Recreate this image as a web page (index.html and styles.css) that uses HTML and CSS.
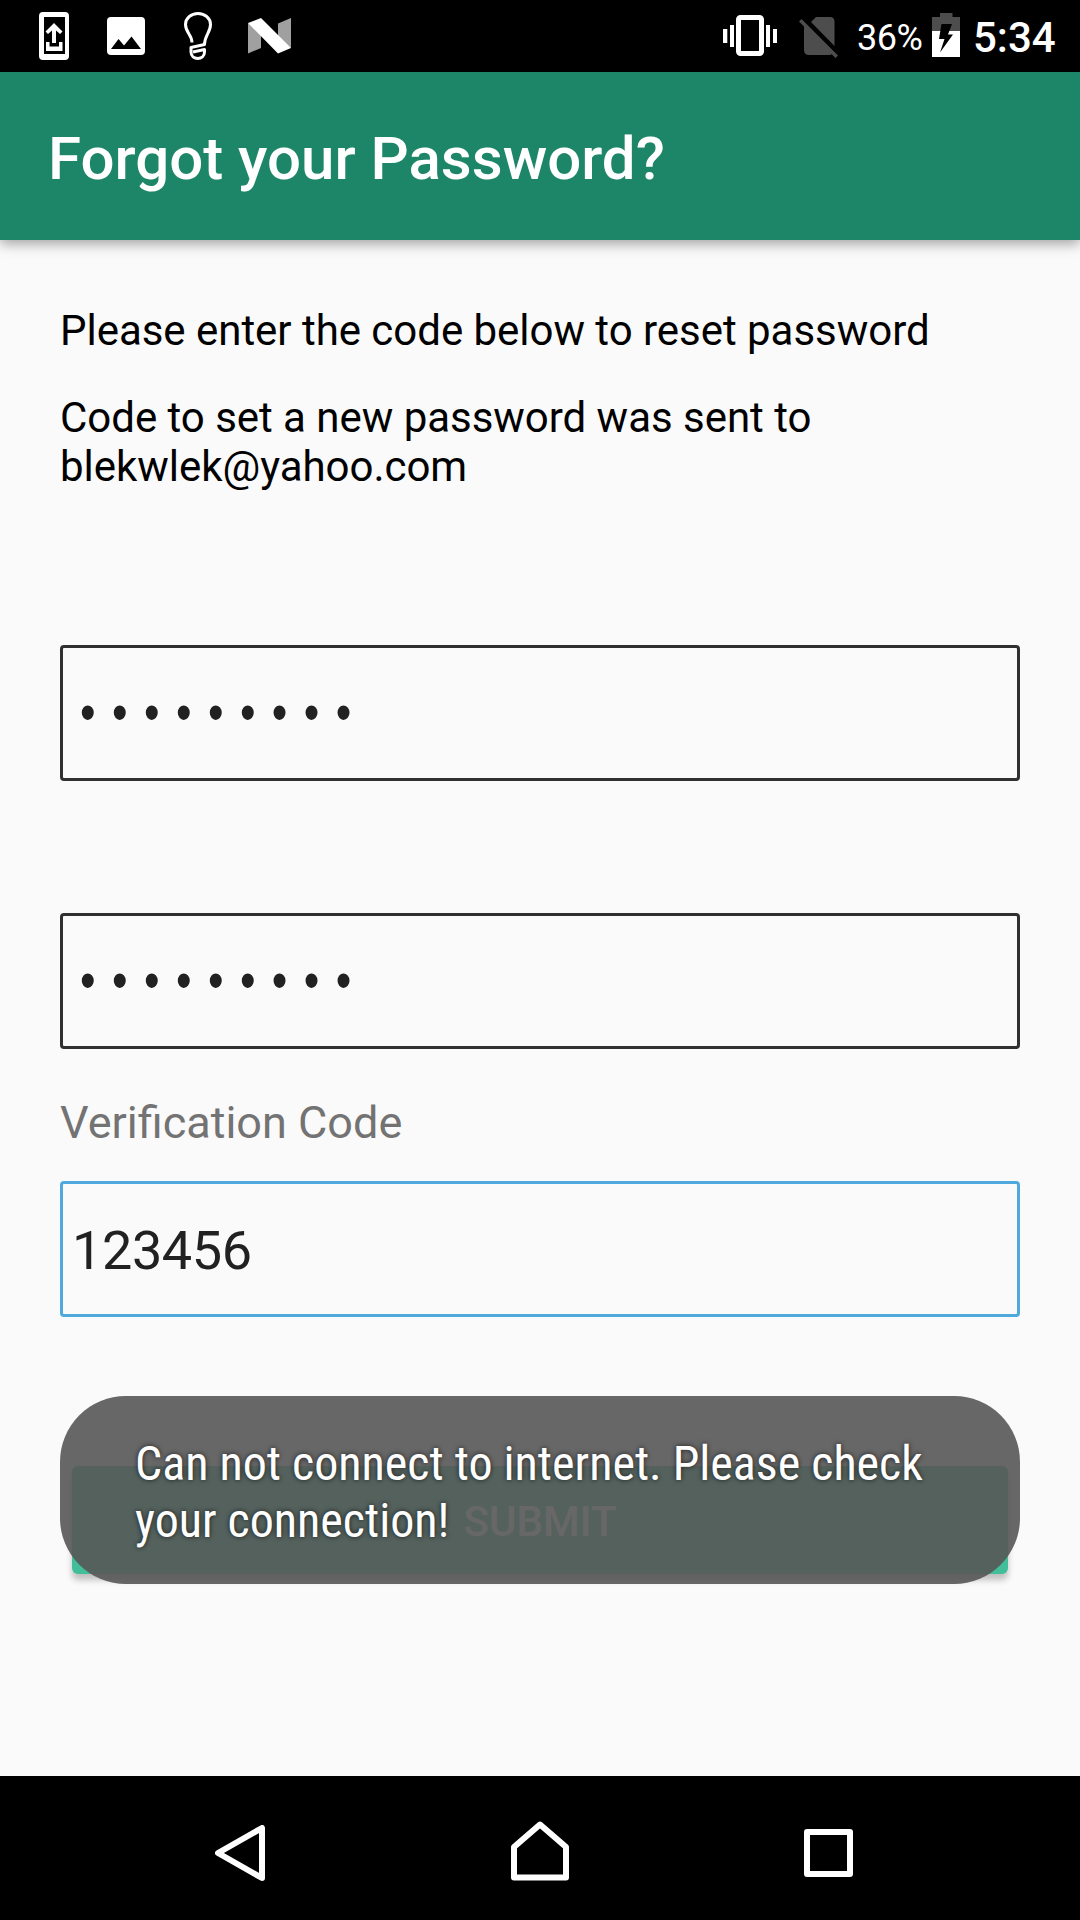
FILE: index.html
```html
<!DOCTYPE html>
<html lang="en">
<head>
<meta charset="utf-8">
<title>Forgot your Password?</title>
<link rel="stylesheet" href="styles.css">
</head>
<body>
<div class="screen">
  <header class="status-bar">
    <div class="status-notifications">
      <svg width="30" height="48" viewBox="0 0 30 48"><path fill="#fff" fill-rule="evenodd" d="M4 0H26Q30 0 30 4V44Q30 48 26 48H4Q0 48 0 44V4Q0 0 4 0ZM5 5V42H26V5Z"/><path fill="#fff" d="M15 11 23.5 19.5 21 22 17 18.5V31H13V18.5L9 22 6.500 19.500ZM7 30H10.500V34.500H20V30H23.500V39H7Z"/></svg>
      <svg width="38" height="38" viewBox="0 0 38 38"><path fill="#fff" fill-rule="evenodd" d="M4 0H34Q38 0 38 4V34Q38 38 34 38H4Q0 38 0 34V4Q0 0 4 0ZM4 32H34L24.500 19.500 17 28.500 11.500 22Z"/></svg>
      <svg width="28" height="48" viewBox="0 0 28 48"><path fill="none" stroke="#fff" stroke-width="3" stroke-linejoin="round" d="M8 30.500C8 23 1.500 20.500 1.500 12.500A12.500 11 0 0 1 26.500 12.500C26.500 20.500 20.500 23.500 20.500 32.500L7 35.500V40C7 48.500 20.500 48.500 20.500 40V37.500L9 40"/></svg>
      <svg width="43" height="36" viewBox="0 0 43 36"><path fill="#a0a0a0" d="M0 5 13 12V30L0 35.500ZM30 5.500 43 0V30L30 23Z"/><path fill="#fff" d="M0 5 13 0 43 30 30 35.500Z"/></svg>
    </div>
    <div class="status-system">
      <svg width="54" height="42" viewBox="0 0 54 42"><rect x="15.500" y="2.500" width="23" height="36" rx="2" fill="none" stroke="#fff" stroke-width="5"/><path fill="#fff" d="M0 14H4.300V28H0ZM7 10H11V32H7ZM43 10H47V32H43ZM50 14H54V28H50Z"/></svg>
      <svg class="no-sim" width="40" height="43" viewBox="0 0 40 43"><path fill="#4d4d4d" d="M17 1H31Q35.500 1 35.500 5.500V30L12 6ZM5 10 33 38Q32 39 30 39H10Q5 39 5 34ZM2.500 3 39 39.500 36.500 42 0 5.500Z"/></svg>
      <span class="battery-level">36%</span>
      <svg class="battery" width="28" height="44" viewBox="0 0 28 44"><path fill="#4d4d4d" d="M8 0H20.500V4H28V18H0V4H8Z"/><path fill="#fff" d="M0 18H28V44H0Z"/><path fill="#000" d="M9.500 11H20L16 21.500H21L8 39.500 12.500 26H7Z"/></svg>
      <span class="clock">5:34</span>
    </div>
  </header>
  <div class="app-bar"><h1 class="title">Forgot your Password?</h1></div>
  <main class="content">
    <p class="message">Please enter the code below to reset password</p>
    <p class="message sent">Code to set a new password was sent to blekwlek@yahoo.com</p>
    <div class="field first"><span class="dots">•••••••••</span></div>
    <div class="field"><span class="dots">•••••••••</span></div>
    <label class="label">Verification Code</label>
    <div class="field code">123456</div>
    <div class="submit-area">
      <button class="submit" type="button">SUBMIT</button>
      <div class="toast" role="alert"><span class="toast-text">Can not connect to internet. Please check<br>your connection!</span></div>
    </div>
  </main>
  <nav class="nav-bar">
    <svg width="50" height="56" viewBox="0 0 50 56"><path d="M3 28 47 3V53Z"/></svg>
    <svg class="home" width="58" height="60" viewBox="0 0 58 60"><path d="M3 26 29 3.500 55 26V56.500H3Z"/></svg>
    <svg width="49" height="48" viewBox="0 0 49 48"><path d="M3 3H46V45H3Z"/></svg>
  </nav>
</div>
</body>
</html>
```
FILE: styles.css
```css
* { box-sizing: border-box; }
body { margin: 0; font-family: Roboto, sans-serif; }
svg { display: block; flex: none; }
.screen { width: 1080px; height: 1920px; display: flex; flex-direction: column; background: #fafafa; overflow: hidden; }

.status-bar { height: 72px; flex: none; background: #000; color: #fff; display: flex; justify-content: space-between; padding: 0 25px 0 39px; }
.status-notifications { display: flex; align-items: center; gap: 38px; }
.status-notifications svg:nth-child(3) { margin-left: 1px; }
.status-notifications svg:nth-child(4) { margin-left: -2px; }
.status-system { display: flex; align-items: center; }
.no-sim { margin: 2px 0 0 22px; }
.battery-level { margin-left: 18px; width: 67px; font-size: 36px; line-height: 44px; padding-top: 3px; white-space: nowrap; letter-spacing: -0.5px; }
.battery { margin: -2px 0 0 8px; }
.clock { margin-left: 13px; width: 82px; font-size: 42px; font-weight: 500; line-height: 48px; padding-top: 4px; white-space: nowrap; }

.app-bar { height: 168px; flex: none; background: #1e8668; color: #fff; display: flex; align-items: center; padding: 6px 48px 0; box-shadow: 0 4px 12px rgba(0, 0, 0, .35); }
.title { margin: 0; font-size: 60px; line-height: 70px; font-weight: 500; }

.content { flex: 1; padding: 66px 60px 0; display: flex; flex-direction: column; }
.message { margin: 0; font-size: 42px; line-height: 49px; letter-spacing: -0.03px; color: #000; }
.sent { margin-top: 38px; }
.field { height: 136px; flex: none; border: 3px solid #303030; border-radius: 4px; color: #212121; font-size: 54px; display: flex; align-items: center; padding-left: 9px; }
.first { margin-top: 154px; margin-bottom: 132px; }
.dots { font-family: "Liberation Mono", monospace; letter-spacing: 6.6px; padding: 6px 0 0 3px; transform: scaleX(.82); transform-origin: left; }
.label { margin-top: 47px; font-size: 45px; line-height: 53px; color: #737373; }
.code { margin-top: 32px; border-color: #4fa9dc; letter-spacing: -0.4px; padding-top: 2px; }

.submit-area { position: relative; margin-top: 149px; padding: 0 12px; height: 108px; display: flex; }
.submit { flex: 1; border: 0; padding: 2px 0 0; border-radius: 6px; background: #42bf9a; color: #fff; font: 500 42px/49px Roboto, sans-serif; box-shadow: 0 6px 6px rgba(0, 0, 0, .24); }
.toast { position: absolute; left: 0; top: -70px; width: 960px; height: 188px; border-radius: 66px; background: rgba(86, 86, 86, .9); color: #fff; padding: 39px 75px; }
.toast-text { display: block; font-family: "Roboto Condensed", Roboto, sans-serif; font-stretch: 75%; font-size: 48px; line-height: 57px; white-space: nowrap; text-shadow: 0 0 5px rgba(0, 0, 0, .73); }

.nav-bar { height: 144px; flex: none; background: #000; display: flex; align-items: center; padding: 10px 227px 0 215px; justify-content: space-between; }
.nav-bar path { fill: none; stroke: #fff; stroke-width: 6; stroke-linejoin: round; }
.home { margin: -4px 0 0 10px; }
```
